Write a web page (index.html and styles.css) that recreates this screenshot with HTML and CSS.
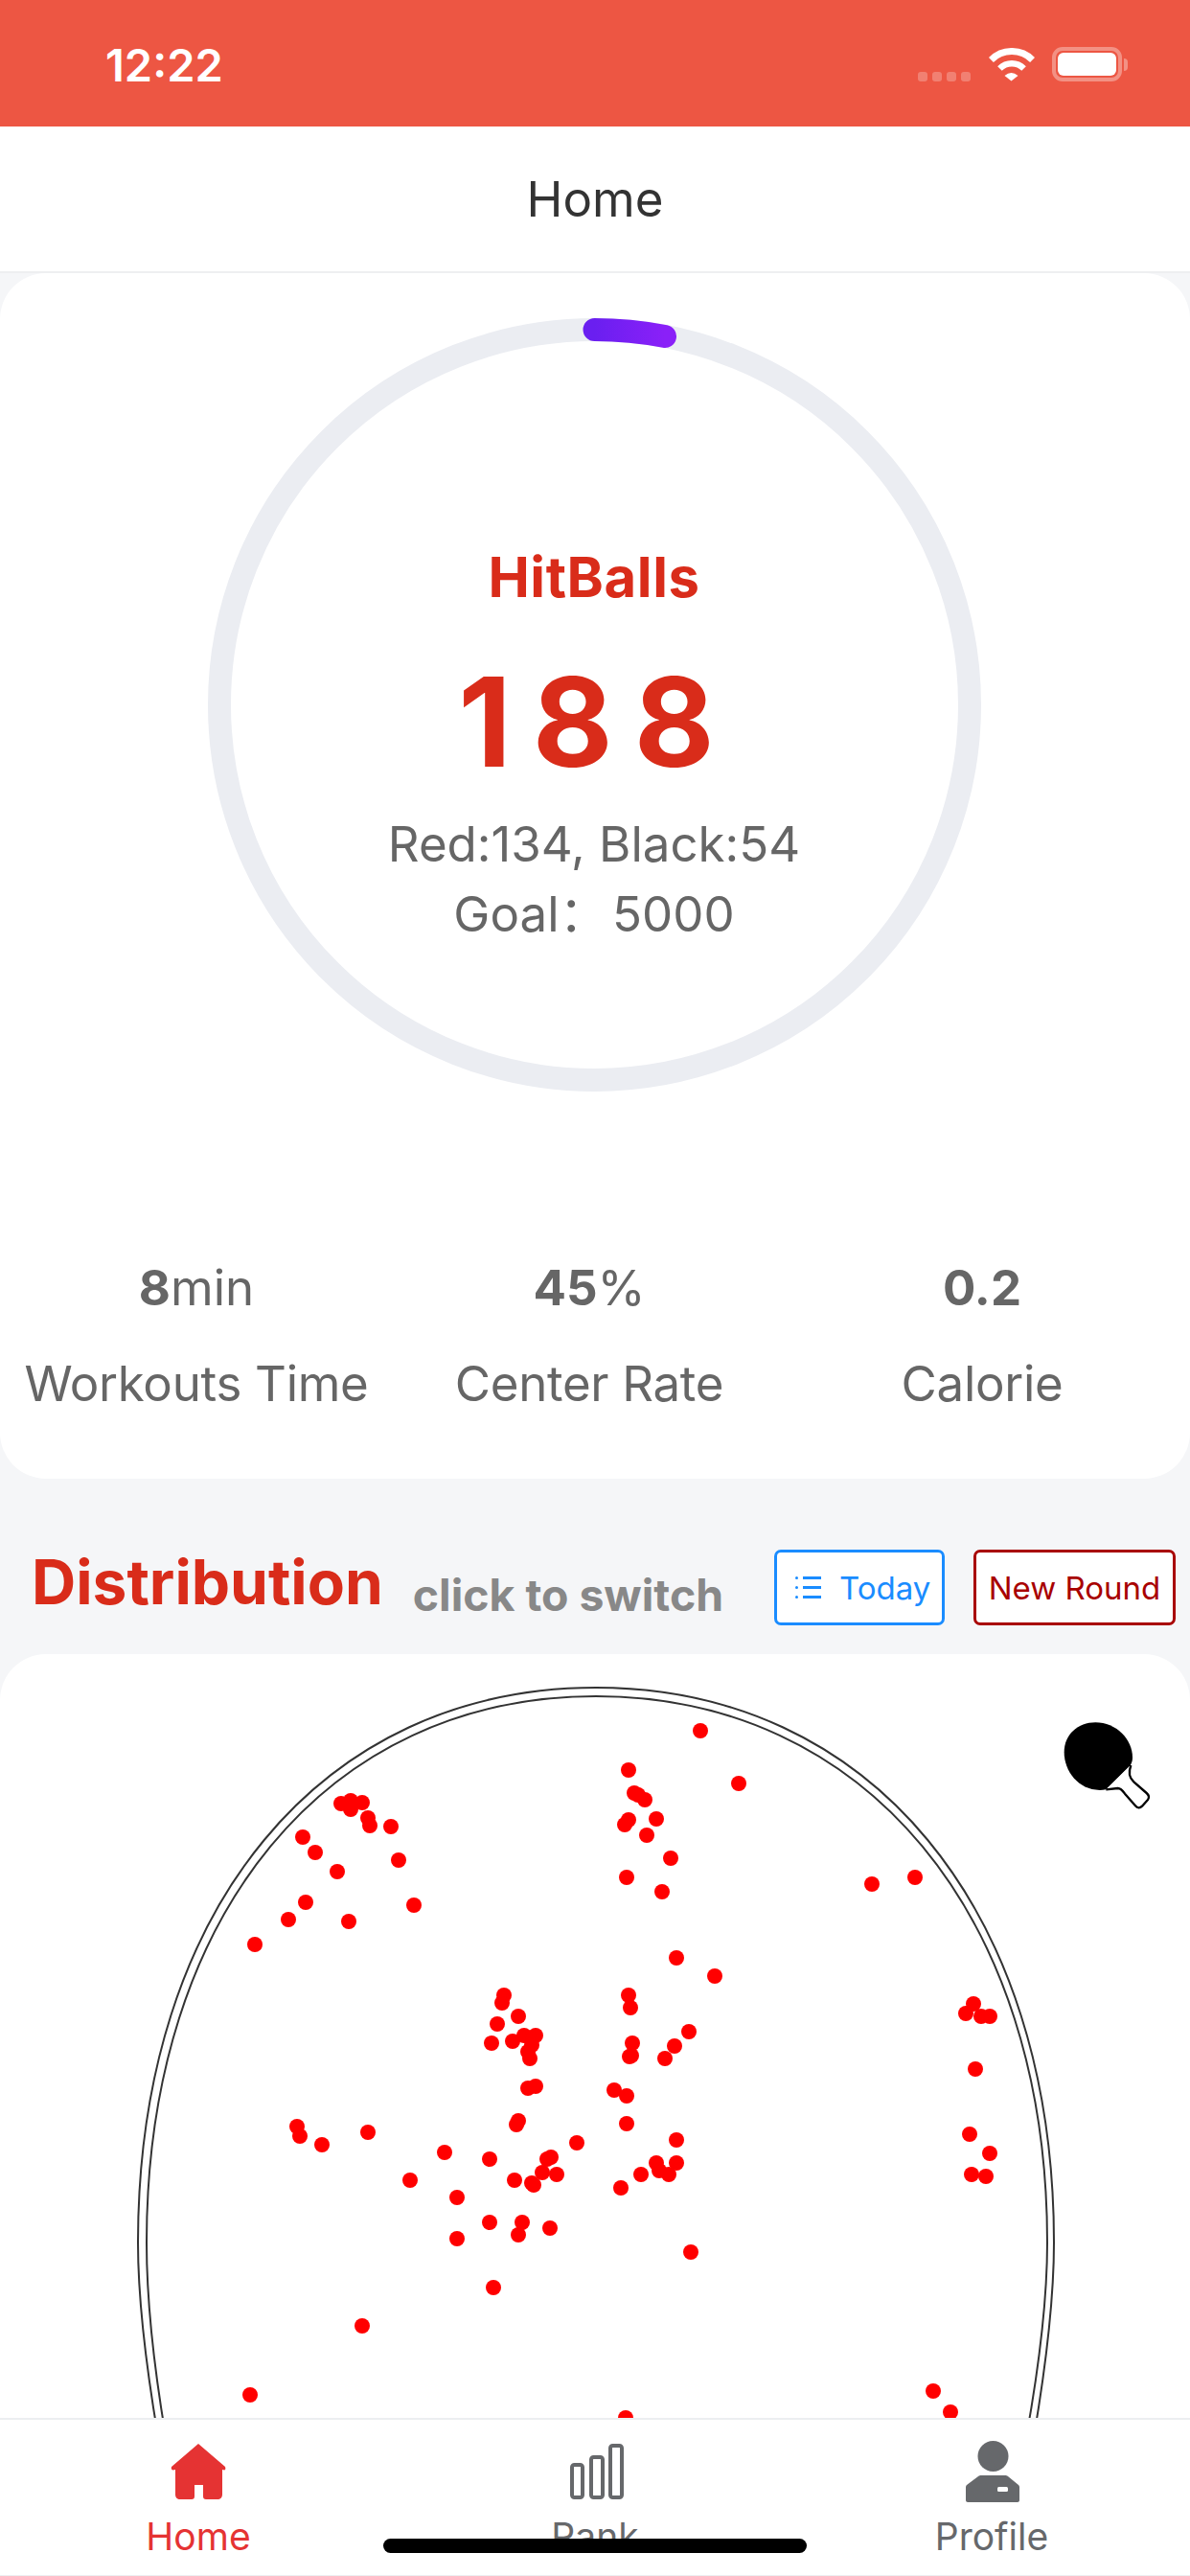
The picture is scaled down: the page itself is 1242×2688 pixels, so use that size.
FILE: index.html
```html
<!DOCTYPE html>
<html lang="en">
<head>
<meta charset="utf-8">
<title>Home</title>
<link rel="stylesheet" href="styles.css">
</head>
<body>
<div class="app">
  <header class="status">
    <span class="time">12:22</span>
    <div class="status-icons">
      <div class="signal"><i></i><i></i><i></i><i></i></div>
      <svg class="wifi" viewBox="0 0 48 35"><g fill="none" stroke="#fff"><path d="M2.43 12.43A30.5 30.5 0 0 1 45.57 12.43" stroke-width="7"/><path d="M11.45 21.45A17.75 17.75 0 0 1 36.55 21.45" stroke-width="6.5"/></g><path d="M16.5 29Q23.5 23 30.5 29L23.5 34.5Z" fill="#fff"/></svg>
      <div class="battery"><div class="battery-fill"></div></div>
      <div class="battery-nub"></div>
    </div>
  </header>
  <nav class="navbar">Home</nav>
  <section class="card summary">
    <div class="ring-wrap">
      <svg class="ring" viewBox="0 0 807 807">
        <defs><linearGradient id="arc" x1="0" x2="1" y1="0" y2="0"><stop offset="0" stop-color="#6a1ff0"/><stop offset="1" stop-color="#8a20f8"/></linearGradient></defs>
        <circle cx="403.5" cy="403.5" r="391.5" fill="none" stroke="#ebedf2" stroke-width="24"/>
        <path d="M403.5 12A391.5 391.5 0 0 1 477 19" fill="none" stroke="url(#arc)" stroke-width="24" stroke-linecap="round"/>
      </svg>
      <div class="ring-text">
        <div class="ring-title">HitBalls</div>
        <div class="ring-count">188</div>
        <div class="ring-line">Red:134, Black:54</div>
        <div class="ring-line">Goal：&#8202;5000</div>
      </div>
    </div>
    <div class="stats">
      <div class="stat"><div class="stat-value"><b>8</b>min</div><div class="stat-label">Workouts Time</div></div>
      <div class="stat"><div class="stat-value"><b>45</b>%</div><div class="stat-label">Center Rate</div></div>
      <div class="stat"><div class="stat-value"><b>0.2</b></div><div class="stat-label">Calorie</div></div>
    </div>
  </section>
  <div class="section-head">
    <span class="section-title">Distribution</span>
    <span class="section-hint">click to switch</span>
    <div class="section-actions">
      <div class="btn btn-today">
        <svg class="list-icon" viewBox="0 0 27 25"><g fill="#1a8cff"><rect x="0" y="1" width="3" height="3" rx="1.5"/><rect x="0" y="11" width="3" height="3" rx="1.5"/><rect x="0" y="21" width="3" height="3" rx="1.5"/><rect x="8" y="1" width="19" height="3"/><rect x="8" y="11" width="19" height="3"/><rect x="8" y="21" width="19" height="3"/></g></svg>
        Today
      </div>
      <div class="btn btn-round">New Round</div>
    </div>
  </div>
  <section class="card board">
    <svg class="table" viewBox="0 1726 1242 962">
      <path class="edge" d="M622 1761C336 1761 144 1992 144 2340C144 2400 152 2470 168 2560M622 1761C908 1761 1100 1992 1100 2340C1100 2400 1092 2470 1076 2560"/>
      <path class="edge" d="M622 1770C342 1770 153 1997 153 2340C153 2400 160 2470 176 2560M622 1770C902 1770 1093 1997 1093 2340C1093 2400 1085 2470 1068 2560"/>
      <g class="dots">
        <circle cx="656" cy="1847" r="8"/><circle cx="662" cy="1871" r="8"/><circle cx="666" cy="1873" r="8"/><circle cx="673" cy="1878" r="8"/><circle cx="656" cy="1899" r="8"/><circle cx="652" cy="1904" r="8"/><circle cx="675" cy="1915" r="8"/><circle cx="654" cy="1959" r="8"/><circle cx="685" cy="1898" r="8"/><circle cx="731" cy="1806" r="8"/><circle cx="771" cy="1861" r="8"/><circle cx="700" cy="1939" r="8"/><circle cx="691" cy="1974" r="8"/><circle cx="910" cy="1966" r="8"/><circle cx="955" cy="1959" r="8"/>
        <circle cx="356" cy="1882" r="8"/><circle cx="366" cy="1879" r="8"/><circle cx="378" cy="1881" r="8"/><circle cx="366" cy="1888" r="8"/><circle cx="384" cy="1897" r="8"/><circle cx="386" cy="1905" r="8"/><circle cx="408" cy="1906" r="8"/><circle cx="316" cy="1917" r="8"/><circle cx="329" cy="1933" r="8"/><circle cx="352" cy="1953" r="8"/><circle cx="416" cy="1941" r="8"/><circle cx="319" cy="1985" r="8"/><circle cx="301" cy="2003" r="8"/><circle cx="364" cy="2005" r="8"/><circle cx="432" cy="1988" r="8"/><circle cx="266" cy="2029" r="8"/>
        <circle cx="526" cy="2082" r="8"/><circle cx="524" cy="2090" r="8"/><circle cx="541" cy="2104" r="8"/><circle cx="519" cy="2112" r="8"/><circle cx="513" cy="2132" r="8"/><circle cx="535" cy="2130" r="8"/><circle cx="547" cy="2124" r="8"/><circle cx="559" cy="2124" r="8"/><circle cx="555" cy="2134" r="8"/><circle cx="551" cy="2141" r="8"/><circle cx="553" cy="2148" r="8"/>
        <circle cx="656" cy="2082" r="8"/><circle cx="658" cy="2095" r="8"/><circle cx="660" cy="2132" r="8"/><circle cx="659" cy="2145" r="8"/><circle cx="657" cy="2146" r="8"/><circle cx="706" cy="2043" r="8"/><circle cx="746" cy="2062" r="8"/><circle cx="719" cy="2120" r="8"/><circle cx="704" cy="2135" r="8"/><circle cx="694" cy="2148" r="8"/>
        <circle cx="551" cy="2179" r="8"/><circle cx="559" cy="2177" r="8"/><circle cx="641" cy="2181" r="8"/><circle cx="654" cy="2187" r="8"/><circle cx="541" cy="2213" r="8"/><circle cx="539" cy="2217" r="8"/><circle cx="654" cy="2216" r="8"/>
        <circle cx="310" cy="2219" r="8"/><circle cx="313" cy="2229" r="8"/><circle cx="336" cy="2238" r="8"/><circle cx="384" cy="2225" r="8"/><circle cx="464" cy="2246" r="8"/><circle cx="511" cy="2253" r="8"/><circle cx="602" cy="2236" r="8"/><circle cx="575" cy="2251" r="8"/><circle cx="571" cy="2253" r="8"/><circle cx="566" cy="2267" r="8"/><circle cx="581" cy="2269" r="8"/><circle cx="428" cy="2275" r="8"/><circle cx="537" cy="2275" r="8"/><circle cx="557" cy="2280" r="8"/><circle cx="555" cy="2278" r="8"/>
        <circle cx="706" cy="2233" r="8"/><circle cx="706" cy="2257" r="8"/><circle cx="685" cy="2257" r="8"/><circle cx="688" cy="2265" r="8"/><circle cx="698" cy="2269" r="8"/><circle cx="669" cy="2269" r="8"/><circle cx="648" cy="2283" r="8"/>
        <circle cx="1016" cy="2091" r="8"/><circle cx="1008" cy="2101" r="8"/><circle cx="1024" cy="2104" r="8"/><circle cx="1033" cy="2104" r="8"/><circle cx="1018" cy="2159" r="8"/><circle cx="1012" cy="2227" r="8"/><circle cx="1033" cy="2247" r="8"/><circle cx="1014" cy="2269" r="8"/><circle cx="1029" cy="2271" r="8"/>
        <circle cx="477" cy="2293" r="8"/><circle cx="511" cy="2319" r="8"/><circle cx="545" cy="2319" r="8"/><circle cx="541" cy="2332" r="8"/><circle cx="574" cy="2325" r="8"/><circle cx="477" cy="2336" r="8"/><circle cx="721" cy="2350" r="8"/><circle cx="515" cy="2387" r="8"/><circle cx="378" cy="2427" r="8"/><circle cx="261" cy="2499" r="8"/><circle cx="974" cy="2495" r="8"/><circle cx="992" cy="2517" r="8"/><circle cx="653" cy="2523" r="8"/>
      </g>
    </svg>
    <svg class="paddle" viewBox="0 0 546 480">
      <path d="M283 322C205 335 152 270 152 205C152 150 195 112 250 112C315 112 366 165 366 222C366 230 364 238 360 245Z" fill="#000"/>
      <path d="M283 322L320 318C330 318 335 325 342 335L375 373C382 382 390 380 396 374L414 354C420 346 418 340 410 333L370 298C355 285 352 270 361 246" fill="#fff" stroke="#000" stroke-width="7" stroke-linejoin="round"/>
    </svg>
  </section>
  <footer class="tabbar">
    <div class="tab tab-active">
      <svg class="tab-icon" viewBox="0 0 60 64"><path d="M30 3L58 27C59 30 58 31 55 30V56C55 59 53 61 50 61H38C36 61 35 60 35 58V46H26V58C26 60 25 61 23 61H11C8 61 6 59 6 56V30C3 31 1 30 2 27Z" fill="#e53333"/></svg>
      <span>Home</span>
    </div>
    <div class="tab">
      <svg class="tab-icon" viewBox="0 0 60 64"><g fill="none" stroke="#66686b" stroke-width="4"><rect x="6" y="25" width="11" height="34" rx="2.5"/><rect x="26" y="17" width="12" height="42" rx="2.5"/><rect x="46" y="5" width="12" height="54" rx="2.5"/></g></svg>
      <span>Rank</span>
    </div>
    <div class="tab">
      <svg class="tab-icon" viewBox="0 0 60 64"><circle cx="31.5" cy="16" r="16" fill="#66686b"/><path d="M19 36H44C45 36 46 36 47 37L58 46C59 47 59 48 59 49V62C59 63 58 64 57 64H5C4 64 3 63 3 62V49C3 48 3 47 4 46L16 37C17 36 18 36 19 36Z" fill="#66686b"/><rect x="36" y="48" width="11" height="5" rx="1.5" fill="#fff"/></svg>
      <span>Profile</span>
    </div>
    <div class="home-indicator"></div>
  </footer>
</div>
</body>
</html>
```
FILE: styles.css
```css
* { box-sizing: border-box; }
html, body { margin: 0; padding: 0; }
body { font-family: Inter, "Noto Sans CJK SC", sans-serif; background: #f5f6f8; color: #666; }
.app { position: relative; width: 1242px; height: 2688px; overflow: hidden; background: #f5f6f8; }

.status { height: 132px; background: #ed5643; display: flex; justify-content: space-between; padding: 0 65px 0 110px; align-items: flex-start; }
.time { color: #fff; font-weight: 600; font-size: 47px; line-height: 44px; margin-top: 46px; }
.status-icons { display: flex; align-items: flex-start; margin-top: 49px; }
.signal { display: flex; gap: 5px; margin-top: 26px; }
.signal i { display: block; width: 10px; height: 10px; border-radius: 3px; background: rgba(255,255,255,.25); }
.wifi { width: 48px; height: 35px; margin: 1px 0 0 19px; }
.battery { width: 73px; height: 36px; margin-left: 18px; border: 4px solid rgba(255,255,255,.35); border-radius: 11px; padding: 2px; }
.battery-fill { width: 100%; height: 100%; background: #fff; border-radius: 6px; }
.battery-nub { width: 4px; height: 13px; margin: 12px 0 0 2px; background: rgba(255,255,255,.35); border-radius: 0 7px 7px 0; }

.navbar { height: 153px; background: #fff; border-bottom: 2px solid #eeeff1; display: flex; align-items: center; justify-content: center; font-size: 51px; color: #333; padding-bottom: 1px; }

.card { background: #fff; border-radius: 48px; }
.summary { padding: 47px 0 64px; }
.ring-wrap { display: grid; justify-items: center; width: 1240px; }
.ring, .ring-text { grid-area: 1 / 1; }
.ring { width: 807px; height: 807px; display: block; }
.ring-text { display: flex; flex-direction: column; align-items: center; padding-top: 240px; }
.ring-title { color: #d92c1a; font-weight: 700; font-size: 58px; line-height: 60px; letter-spacing: .6px; }
.ring-count { color: #d92c1a; font-weight: 700; font-size: 129px; line-height: 130px; letter-spacing: 22px; margin: 56px 0 0 6px; }
.ring-line { font-size: 51px; line-height: 73px; }
.ring-count + .ring-line { margin-top: 26px; }

.stats { display: grid; grid-template-columns: repeat(3, 410px); margin-top: 170px; text-align: center; }
.stat-value { font-size: 51px; line-height: 70px; }
.stat-value b { font-weight: 700; }
.stat-label { font-size: 51px; line-height: 70px; margin-top: 30px; letter-spacing: -.3px; }

.section-head { height: 183px; display: flex; align-items: flex-start; padding: 0 15px 0 33px; }
.section-title { color: #d92c1a; font-weight: 700; font-size: 64px; line-height: 80px; margin-top: 68px; }
.section-hint { color: #888; font-weight: 700; font-size: 46.4px; line-height: 60px; margin: 91px 0 0 31px; }
.section-actions { display: flex; gap: 30px; margin-left: auto; margin-top: 74px; }
.btn { height: 79px; background: #fff; border: 3px solid; border-radius: 7px; display: flex; align-items: center; font-size: 33px; }
.btn-today { width: 178px; color: #1a8cff; border-color: #1a8cff; gap: 19px; padding-left: 19px; }
.btn-round { width: 211px; color: #a80000; border-color: #a80000; justify-content: center; }
.list-icon { width: 27px; height: 25px; }

.board { position: relative; height: 962px; overflow: hidden; border-radius: 48px 48px 0 0; }
.table { display: block; width: 1242px; height: 962px; }
.edge { fill: none; stroke: #333; stroke-width: 2; }
.dots { fill: #ff0000; }
.paddle { position: absolute; left: 1060px; top: 34px; width: 182px; height: 160px; }

.tabbar { position: absolute; left: 0; right: 0; bottom: 0; height: 165px; background: #fff; border-top: 2px solid #eceef1; border-bottom: 1px solid #eceef1; display: grid; grid-template-columns: 414px 414px 414px; padding-top: 22px; }
.tab { display: flex; flex-direction: column; align-items: center; color: #66686b; font-size: 39px; line-height: 48px; }
.tab-active { color: #e53333; }
.tab-icon { width: 60px; height: 64px; display: block; margin-bottom: 12px; overflow: visible; }
.home-indicator { position: absolute; left: 400px; top: 124px; width: 442px; height: 15px; border-radius: 8px; background: #000; }
```
